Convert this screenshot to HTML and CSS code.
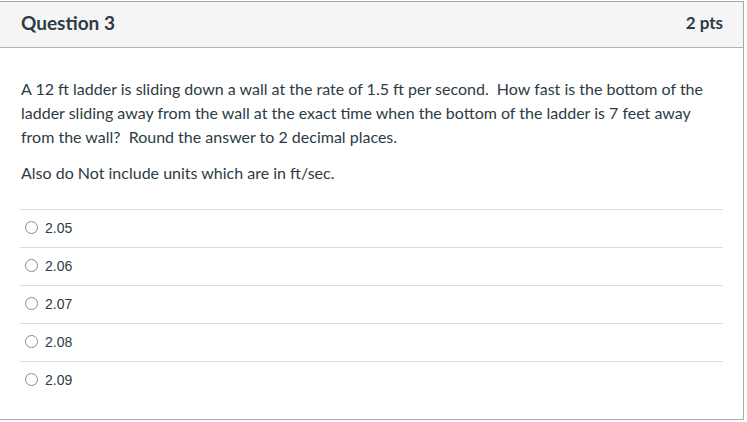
FILE: index.html
```html
<!DOCTYPE html>
<html>
<head>
<meta charset="utf-8">
<link rel="stylesheet" href="styles.css">
</head>
<body>
<div class="card">
  <div class="header">
    <span class="title">Question 3</span>
    <span class="pts">2 pts</span>
  </div>
  <div class="content">
    <p class="q">A 12 ft ladder is sliding down a wall at the rate of 1.5 ft per second.&nbsp; How fast is the bottom of the ladder sliding away from the wall at the exact time when the bottom of the ladder is 7 feet away from the wall?&nbsp; Round the answer to 2 decimal places.</p>
    <p class="q2">Also do Not include units which are in ft/sec.</p>
    <div class="answers">
      <div class="answer"><span class="radio"></span><span class="label">2.05</span></div>
      <div class="answer"><span class="radio"></span><span class="label">2.06</span></div>
      <div class="answer"><span class="radio"></span><span class="label">2.07</span></div>
      <div class="answer"><span class="radio"></span><span class="label">2.08</span></div>
      <div class="answer"><span class="radio"></span><span class="label">2.09</span></div>
    </div>
  </div>
</div>
</body>
</html>
```
FILE: styles.css
```css
html, body { margin: 0; padding: 0; background: #fff; }
body { font-family: Lato, "Liberation Sans", sans-serif; color: #2d3b45; }
.card {
  margin-top: 1px;
  width: 744px;
  height: 419px;
  border: 1px solid #a9a9a9;
  border-left: none;
  box-sizing: border-box;
}
.header {
  background: #f5f5f5;
  border-bottom: 1px solid #b3b3b3;
  display: flex;
  align-items: center;
  justify-content: space-between;
  padding: 0 20px 4px 21px;
  box-sizing: border-box;
  height: 46px;
}
.title { font-size: 19px; font-weight: 700; color: #2d3b45; }
.pts { font-size: 17px; font-weight: 700; color: #2d3b45; }
.content { padding: 29px 20px 0 21px; }
.q { margin: 0; font-size: 16px; line-height: 24px; }
.q2 { margin: 12px 0 0; font-size: 16px; line-height: 24px; }
.answers { margin-top: 24px; width: 703px; margin-left: -1px; }
.answer {
  border-top: 1px solid #dcdcdc;
  display: flex;
  align-items: center;
  padding-bottom: 2px;
  height: 35px;
}
.radio {
  width: 11px; height: 11px;
  border: 1px solid #8a8a8a;
  border-radius: 50%;
  margin-left: 5px;
  margin-right: 7px;
}
.label { font-size: 14px; color: #2d3b45; font-family: "Liberation Sans", sans-serif; }
```
